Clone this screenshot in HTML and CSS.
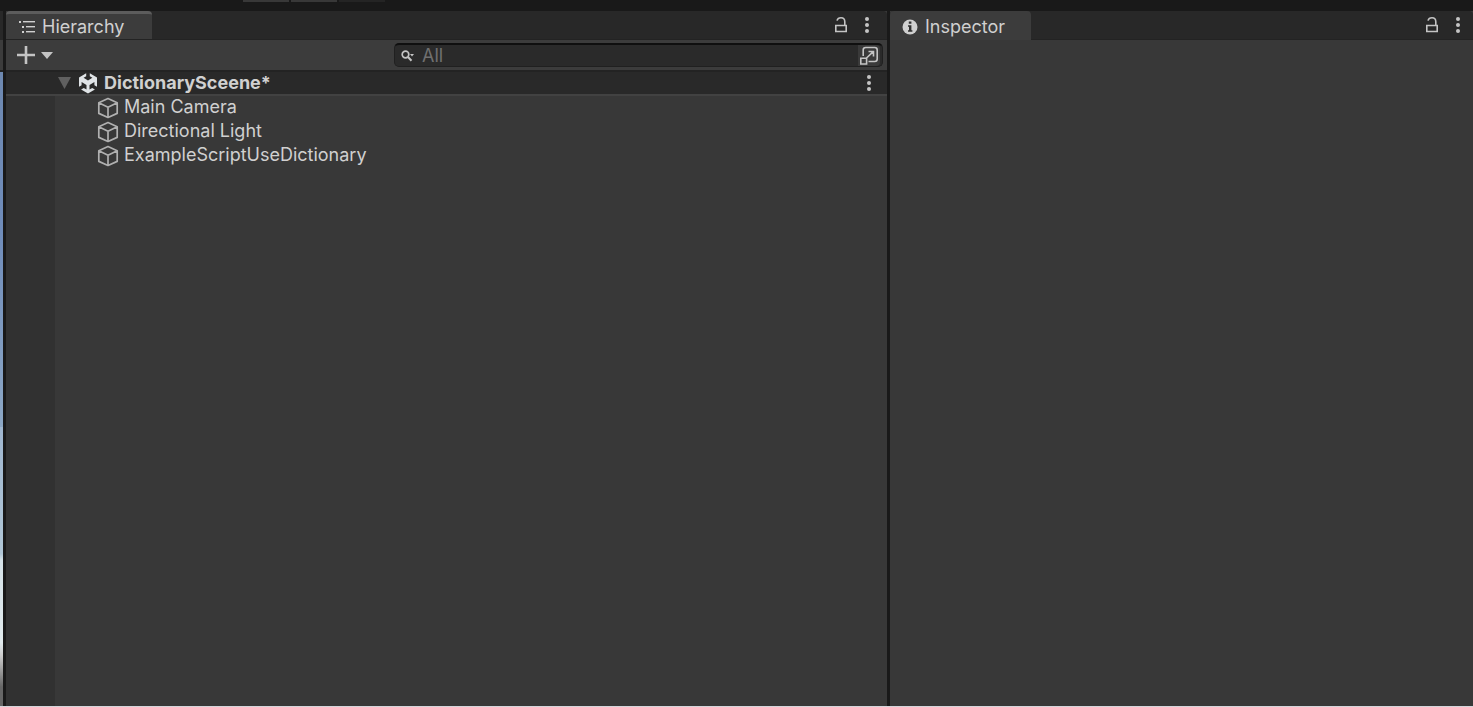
FILE: index.html
```html
<!DOCTYPE html>
<html lang="en">
<head>
    <meta charset="UTF-8">
    <meta name="viewport" content="width=device-width, initial-scale=1.0">
    <title>Hierarchy</title>
    <link rel="stylesheet" href="styles.css">
</head>
<body>
    <!-- Shared icons -->
    <svg class="icon-defs" aria-hidden="true">
        <symbol id="lock" viewBox="0 0 14 18">
            <path d="M1.8 9.5h10.4v6H1.8zM3 4.6C3.6 2.4 5.2 1.8 7 1.8c2.5 0 3.8 1.5 3.8 4v3.7" fill="none" stroke="currentColor" stroke-width="1.6"/>
        </symbol>
        <symbol id="dots" viewBox="0 0 6 18">
            <circle cx="3" cy="3" r="2" fill="currentColor"/>
            <circle cx="3" cy="9" r="2" fill="currentColor"/>
            <circle cx="3" cy="15" r="2" fill="currentColor"/>
        </symbol>
        <symbol id="cube" viewBox="0 0 22 22">
            <path d="M11 1.6l9.2 4.2v10.6L11 20.5l-9.2-4.1V5.8zM1.8 5.8L11 10.2l9.2-4.4M11 10.2v10.3" fill="none" stroke="currentColor" stroke-width="1.7" stroke-linejoin="round"/>
        </symbol>
    </svg>

    <div class="top-bar">
        <span class="top-button"></span>
        <span class="top-button"></span>
        <span class="top-button dim"></span>
    </div>

    <main class="workspace">
        <div class="scene-view">
            <div class="scene-tabs"></div>
            <div class="scene-toolbar"></div>
            <div class="scene-sky"></div>
        </div>

        <section class="panel hierarchy">
            <div class="tab-bar">
                <button type="button" class="tab active">
                    <svg width="16" height="14" viewBox="0 0 16 14" fill="currentColor">
                        <path d="M0 1h2v2H0zM4 1h12v1H4zM3 6h2v2H3zM7 6h9v1H7zM3 11h2v2H3zM7 11h9v1H7z"/>
                        <path d="M4 2h12v1H4zM7 7h9v1H7zM7 12h9v1H7z" opacity=".4"/>
                    </svg>
                    Hierarchy
                </button>
                <div class="tab-actions">
                    <button type="button" aria-label="Lock"><svg width="14" height="18"><use href="#lock"/></svg></button>
                    <button type="button" aria-label="Menu"><svg width="6" height="18"><use href="#dots"/></svg></button>
                </div>
            </div>

            <div class="toolbar">
                <button type="button" class="add-button" aria-label="Create">
                    <svg width="18" height="18" viewBox="0 0 18 18"><path d="M9 0v18M0 9h18" stroke="currentColor" stroke-width="2.6"/></svg>
                    <svg width="12" height="7" viewBox="0 0 12 7"><path d="M0 0h12L6 7z" fill="currentColor"/></svg>
                </button>
                <div class="search">
                    <svg width="14" height="12" viewBox="0 0 14 12">
                        <circle cx="4.5" cy="4.5" r="3.3" fill="none" stroke="currentColor" stroke-width="1.7"/>
                        <path d="M7 7l3.5 3.7" stroke="currentColor" stroke-width="2"/>
                        <path d="M9 4h4l-2 2.5z" fill="currentColor"/>
                    </svg>
                    <input type="text" placeholder="All" aria-label="Search">
                    <button type="button" class="picker" aria-label="Open search">
                        <svg width="20" height="20" viewBox="0 0 20 20" fill="none" stroke="currentColor" stroke-width="1.6">
                            <path d="M4.2 10V4q0-2.5 2.5-2.5h9q2.5 0 2.5 2.5v9q0 2.5-2.5 2.5H9.5M1.8 12.2h5.8V18H1.8zM7.5 12L14 5.8M9.5 5.5h5v5"/>
                        </svg>
                    </button>
                </div>
            </div>

            <div class="scene-row">
                <svg class="arrow" width="13" height="12" viewBox="0 0 13 12"><path d="M0 0h13L6.5 12z" fill="currentColor"/></svg>
                <svg class="unity" width="20" height="22" viewBox="0 0 20 22">
                    <path d="M8.2 1.2v3L5.6 5.8 10 8.4l4.4-2.6-2.6-1.6v-3L19 5.6v9.2l-2.6-1.5v-3.2l-4.9 2.8v4.6l2.7-1.6 2.7 1.5L10 21.4l-6.9-4 2.7-1.5 2.7 1.6v-4.6L3.6 10.100v3.2L1 14.800V5.600z" fill="#dfe3e6"/>
                </svg>
                <span class="scene-name">DictionarySceene*</span>
                <button type="button" class="row-menu" aria-label="Scene menu"><svg width="6" height="18"><use href="#dots"/></svg></button>
            </div>

            <div class="tree">
                <div class="gutter"></div>
                <ul class="objects">
                    <li><svg width="22" height="22"><use href="#cube"/></svg>Main Camera</li>
                    <li><svg width="22" height="22"><use href="#cube"/></svg>Directional Light</li>
                    <li><svg width="22" height="22"><use href="#cube"/></svg>ExampleScriptUseDictionary</li>
                </ul>
            </div>
        </section>

        <section class="panel inspector">
            <div class="tab-bar">
                <button type="button" class="tab">
                    <svg width="16" height="16" viewBox="0 0 16 16">
                        <circle cx="8" cy="8" r="7.5" fill="currentColor"/>
                        <path d="M6.8 2.5h2.6v2.3H6.8zM6 6.3h3.4v5h1v1.5H6v-1.5h1V7.700H6z" fill="#303030"/>
                    </svg>
                    Inspector
                </button>
                <div class="tab-actions">
                    <button type="button" aria-label="Lock"><svg width="14" height="18"><use href="#lock"/></svg></button>
                    <button type="button" aria-label="Menu"><svg width="6" height="18"><use href="#dots"/></svg></button>
                </div>
            </div>
        </section>
    </main>
</body>
</html>
```
FILE: styles.css
```css
* {
    box-sizing: border-box;
}

body {
    margin: 0;
    height: 100vh;
    display: flex;
    flex-direction: column;
    background-color: #191919;
    border-bottom: 1px solid #d5d5da;
    color: #d0d0d0;
    font-family: Inter, sans-serif;
    font-size: 18px;
    line-height: 24px;
}

button {
    display: flex;
    align-items: center;
    padding: 0;
    border: none;
    background: none;
    color: #c4c4c4;
    font: inherit;
}

svg {
    display: block;
    flex: none;
}

.icon-defs {
    display: none;
}

/* Strip above the panels */
.top-bar {
    display: flex;
    gap: 2px;
    height: 11px;
    padding-left: 243px;
}

.top-button {
    width: 46px;
    height: 2px;
    background-color: #383838;
}

.top-button.dim {
    background-color: #242424;
}

.workspace {
    flex: 1;
    display: flex;
    gap: 3px;
    min-height: 0;
}

/* Edge of the scene view */
.scene-view {
    width: 3px;
    display: flex;
    flex-direction: column;
}

.scene-tabs {
    height: 29px;
    background-color: #282828;
}

.scene-toolbar {
    height: 32px;
    background-color: #3c3c3c;
    border-bottom: 2px solid #232323;
}

.scene-sky {
    flex: 1;
    background: linear-gradient(#6d88b0, #6f8cba 25%, #8ca7c5 56%, #9fb6cf 56%, #b0c6d6 76%, #d5e2e8 77%, #e0e9ec 90%, #ccc 92%, #666 97%);
}

/* Panels */
.panel {
    display: flex;
    flex-direction: column;
    min-width: 0;
    background-color: #383838;
}

.hierarchy {
    flex: 881;
}

.inspector {
    flex: 583;
}

.tab-bar {
    display: flex;
    justify-content: space-between;
    height: 29px;
    background-color: #282828;
    border-bottom: 1px solid #232323;
    border-radius: 4px 4px 0 0;
}

.tab {
    gap: 7px;
    height: 29px;
    padding: 2px 26px 0 12px;
    background-color: #3c3c3c;
    border-radius: 4px 4px 0 0;
    color: #d0d0d0;
}

.tab.active {
    height: 28px;
    border-top: 3px solid #5c5c5c;
    padding: 0 28px 0 13px;
}

.tab-actions {
    display: flex;
    align-items: center;
    gap: 16px;
    padding-right: 12px;
}

.hierarchy .tab-actions {
    padding-right: 17px;
}

.toolbar {
    display: flex;
    justify-content: space-between;
    align-items: center;
    height: 32px;
    padding: 0 4px 0 11px;
    background-color: #3c3c3c;
    border-bottom: 2px solid #232323;
}

.add-button {
    gap: 6px;
}

.search {
    display: flex;
    align-items: center;
    width: 489px;
    height: 24px;
    padding: 0 2px 0 6px;
    background-color: #2a2a2a;
    border: 1px solid #202020;
    border-top: 2px solid #0f0f0f;
    border-radius: 5px;
    color: #c4c4c4;
}

.search input {
    flex: 1;
    min-width: 0;
    padding: 0 7px;
    border: none;
    outline: none;
    background: none;
    color: #d0d0d0;
    font: inherit;
}

.search input::placeholder {
    color: #707070;
}

.picker {
    height: 21px;
    padding: 0 1px;
    background-color: #3a3a3a;
    border-radius: 0 4px 4px 0;
}

/* Scene header */
.scene-row {
    display: flex;
    align-items: center;
    height: 24px;
    padding: 0 15px 0 52px;
    background-color: #292929;
    border-bottom: 2px solid #424242;
}

.arrow {
    color: #606060;
}

.unity {
    margin: 0 6px 0 7px;
}

.scene-name {
    flex: 1;
    font-weight: 700;
}

/* Objects */
.tree {
    flex: 1;
    display: flex;
}

.gutter {
    width: 49px;
    background-color: #313131;
}

.objects {
    flex: 1;
    margin: 0;
    padding: 0 0 0 42px;
    list-style: none;
}

.objects li {
    display: flex;
    align-items: flex-start;
    gap: 5px;
    height: 24px;
    line-height: 22px;
}

.objects svg {
    margin-top: 1px;
    color: #b0b0b0;
}
```
